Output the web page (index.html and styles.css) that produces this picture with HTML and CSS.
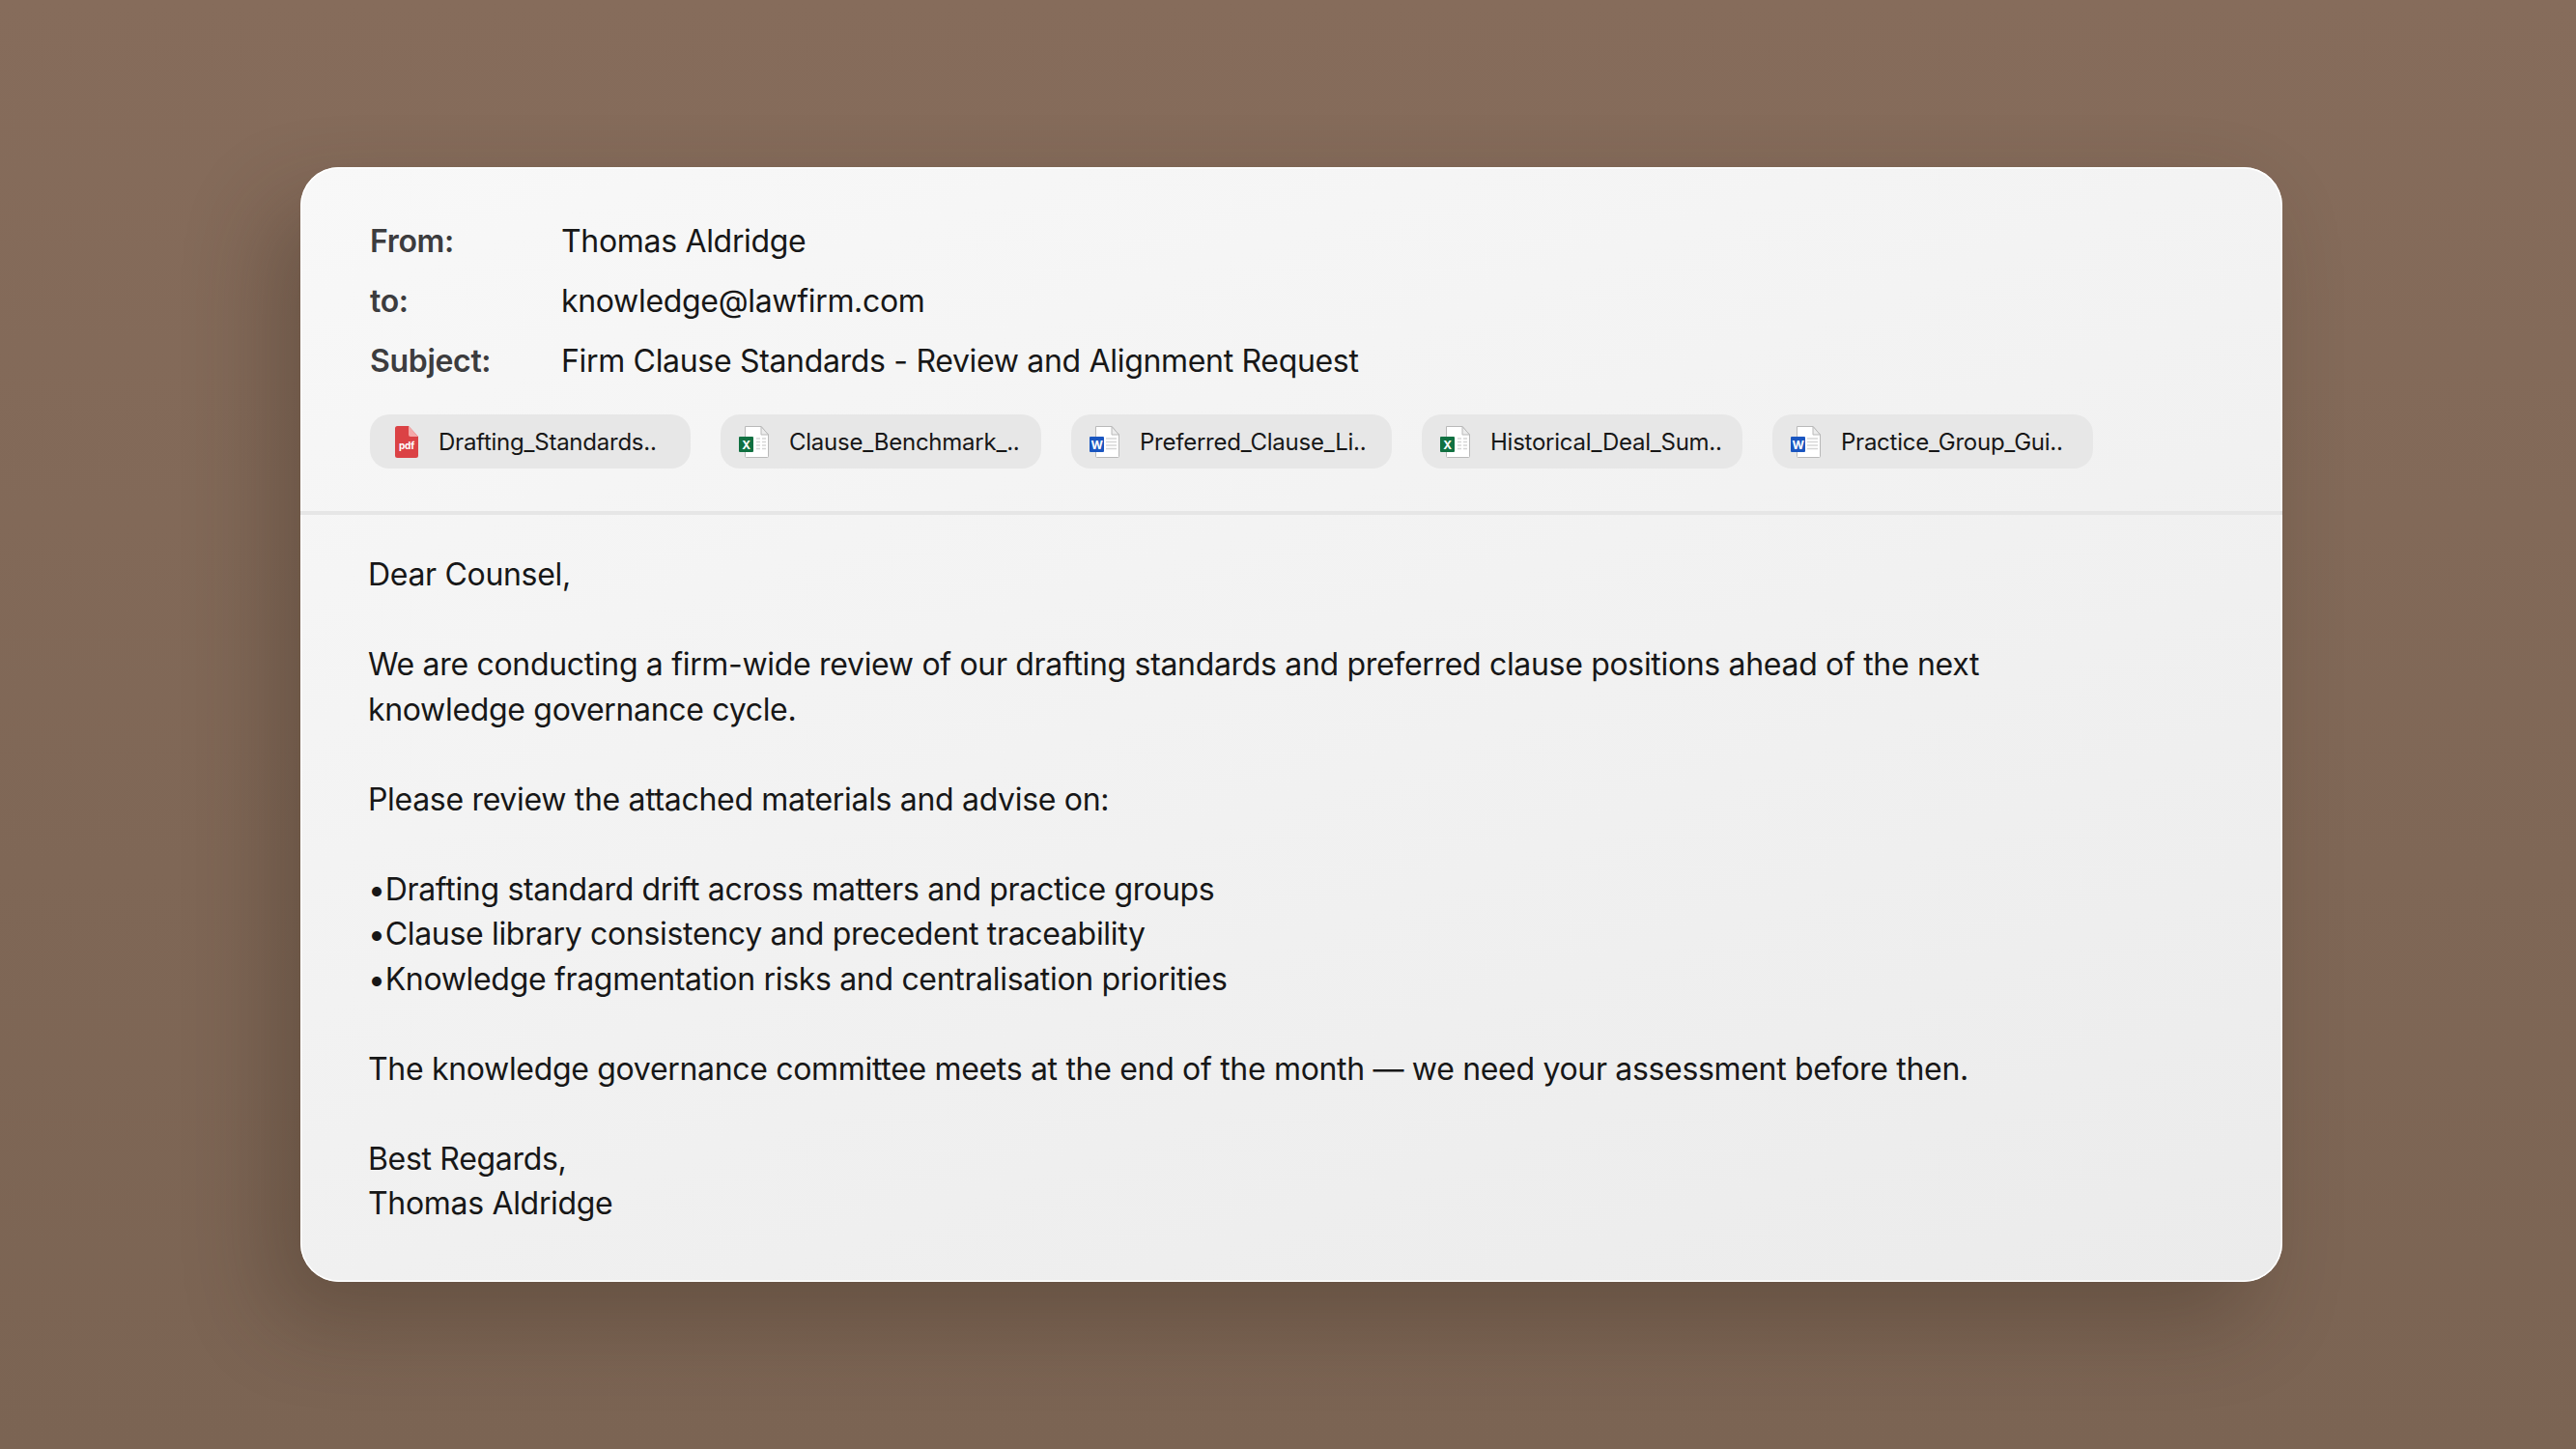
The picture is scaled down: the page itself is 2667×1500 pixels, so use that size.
FILE: index.html
```html
<!DOCTYPE html>
<html lang="en">
<head>
    <meta charset="UTF-8">
    <title>Email</title>
    <link rel="stylesheet" href="styles.css">
</head>
<body>
    <div class="card">
        <header class="head">
            <div class="row"><span class="label">From:</span><span>Thomas Aldridge</span></div>
            <div class="row"><span class="label">to:</span><span>knowledge@lawfirm.com</span></div>
            <div class="row"><span class="label">Subject:</span><span>Firm Clause Standards - Review and Alignment Request</span></div>
            <div class="attachments">
                <div class="chip">
                    <svg class="icon" viewBox="0 0 33 33">
                        <path d="M7 2.500A2.500 2.500 0 0 1 9.500 0H21l10 11v19.500a2.500 2.500 0 0 1-2.500 2.500h-19A2.500 2.500 0 0 1 7 30.500z" fill="#db4245"/>
                        <path d="M21 0l10 11h-8a2 2 0 0 1-2-2z" fill="#f4a9a9"/>
                        <text x="19" y="23.500" class="icon-pdf">pdf</text>
                    </svg>
                    <span>Drafting_Standards..</span>
                </div>
                <div class="chip">
                    <svg class="icon" viewBox="0 0 33 33">
                        <path class="page" d="M6.500.5H23l7.500 8.500v22.500a1 1 0 0 1-1 1h-22a1 1 0 0 1-1-1z"/>
                        <path class="fold" d="M23 .5l7.500 8.500H23z"/>
                        <path class="cells" d="M18 13h4M24 13h4M18 16.500h4M24 16.500h4M18 20h4M24 20h4M18 23.500h4M24 23.500h4"/>
                        <rect class="badge-x" x="0" y="11" width="15" height="16" rx="1"/>
                        <text x="7.500" y="23.500" class="icon-letter">X</text>
                    </svg>
                    <span>Clause_Benchmark_..</span>
                </div>
                <div class="chip">
                    <svg class="icon" viewBox="0 0 33 33">
                        <path class="page" d="M6.500.5H23l7.500 8.500v22.500a1 1 0 0 1-1 1h-22a1 1 0 0 1-1-1z"/>
                        <path class="fold" d="M23 .5l7.500 8.500H23z"/>
                        <path class="cells" d="M17 13h11M17 16.500h11M17 20h11M17 23.500h11"/>
                        <rect class="badge-w" x="0" y="11" width="15" height="16" rx="1"/>
                        <text x="7.500" y="23.500" class="icon-letter">W</text>
                    </svg>
                    <span>Preferred_Clause_Li..</span>
                </div>
                <div class="chip">
                    <svg class="icon" viewBox="0 0 33 33">
                        <path class="page" d="M6.500.5H23l7.500 8.500v22.500a1 1 0 0 1-1 1h-22a1 1 0 0 1-1-1z"/>
                        <path class="fold" d="M23 .5l7.500 8.500H23z"/>
                        <path class="cells" d="M18 13h4M24 13h4M18 16.500h4M24 16.500h4M18 20h4M24 20h4M18 23.500h4M24 23.500h4"/>
                        <rect class="badge-x" x="0" y="11" width="15" height="16" rx="1"/>
                        <text x="7.500" y="23.500" class="icon-letter">X</text>
                    </svg>
                    <span>Historical_Deal_Sum..</span>
                </div>
                <div class="chip">
                    <svg class="icon" viewBox="0 0 33 33">
                        <path class="page" d="M6.500.5H23l7.500 8.500v22.500a1 1 0 0 1-1 1h-22a1 1 0 0 1-1-1z"/>
                        <path class="fold" d="M23 .5l7.500 8.500H23z"/>
                        <path class="cells" d="M17 13h11M17 16.500h11M17 20h11M17 23.500h11"/>
                        <rect class="badge-w" x="0" y="11" width="15" height="16" rx="1"/>
                        <text x="7.500" y="23.500" class="icon-letter">W</text>
                    </svg>
                    <span>Practice_Group_Gui..</span>
                </div>
            </div>
        </header>
        <div class="body">
            <p>Dear Counsel,</p>
            <p>We are conducting a firm-wide review of our drafting standards and preferred clause positions ahead of the next<br>knowledge governance cycle.</p>
            <p>Please review the attached materials and advise on:</p>
            <p>•Drafting standard drift across matters and practice groups<br>•Clause library consistency and precedent traceability<br>•Knowledge fragmentation risks and centralisation priorities</p>
            <p>The knowledge governance committee meets at the end of the month — we need your assessment before then.</p>
            <p>Best Regards,<br>Thomas Aldridge</p>
        </div>
    </div>
</body>
</html>
```

FILE: styles.css
```css
* {
    margin: 0;
    padding: 0;
    box-sizing: border-box;
    font-family: Inter, 'Noto Sans', sans-serif;
}

body {
    width: 2667px;
    height: 1500px;
    overflow: hidden;
    padding: 173px 0 0 311px;
    background: linear-gradient(180deg, #866c5b 0%, #7f6756 60%, #7b6453 100%);
    color: #171717;
}

.card {
    width: 2052px;
    height: 1154px;
    border-radius: 40px;
    background: linear-gradient(160deg, #f8f8f8 0%, #ebebeb 100%);
    box-shadow: inset 0 0 0 1.500px #fff, -30px 40px 90px rgba(50, 35, 25, 0.3);
    overflow: hidden;
}

.head {
    height: 360px;
    padding: 45px 72px 0;
    border-bottom: 4px solid #e6e6e6;
}

.row {
    display: flex;
    height: 62px;
    align-items: center;
    font-size: 32px;
    letter-spacing: -0.32px;
}

.label {
    width: 198px;
    font-weight: 600;
    color: #3c3c3e;
}

.attachments {
    display: flex;
    gap: 31px;
    margin-top: 25px;
}

.chip {
    width: 332px;
    height: 56px;
    display: flex;
    align-items: center;
    gap: 19px;
    padding-left: 19px;
    border-radius: 20px;
    background: #e7e7e7;
    font-size: 24px;
    letter-spacing: -0.24px;
    white-space: nowrap;
}

.icon {
    width: 33px;
    height: 33px;
    flex-shrink: 0;
}

.page {
    fill: #fff;
    stroke: #b9b9b9;
}

.fold {
    fill: #ececec;
    stroke: #b9b9b9;
}

.cells {
    fill: none;
    stroke: #d6d6d6;
    stroke-width: 1.500;
}

.badge-x {
    fill: #107041;
}

.badge-w {
    fill: #1a56c0;
}

.icon-pdf {
    fill: #fff;
    font-size: 10px;
    font-weight: 700;
    letter-spacing: -0.2px;
    text-anchor: middle;
}

.icon-letter {
    fill: #fff;
    font-size: 12px;
    font-weight: 700;
    text-anchor: middle;
}

.body {
    padding: 39px 70px 0;
    font-size: 32px;
    letter-spacing: -0.32px;
    line-height: 46.500px;
}

.body p {
    margin-bottom: 46.500px;
}
```
